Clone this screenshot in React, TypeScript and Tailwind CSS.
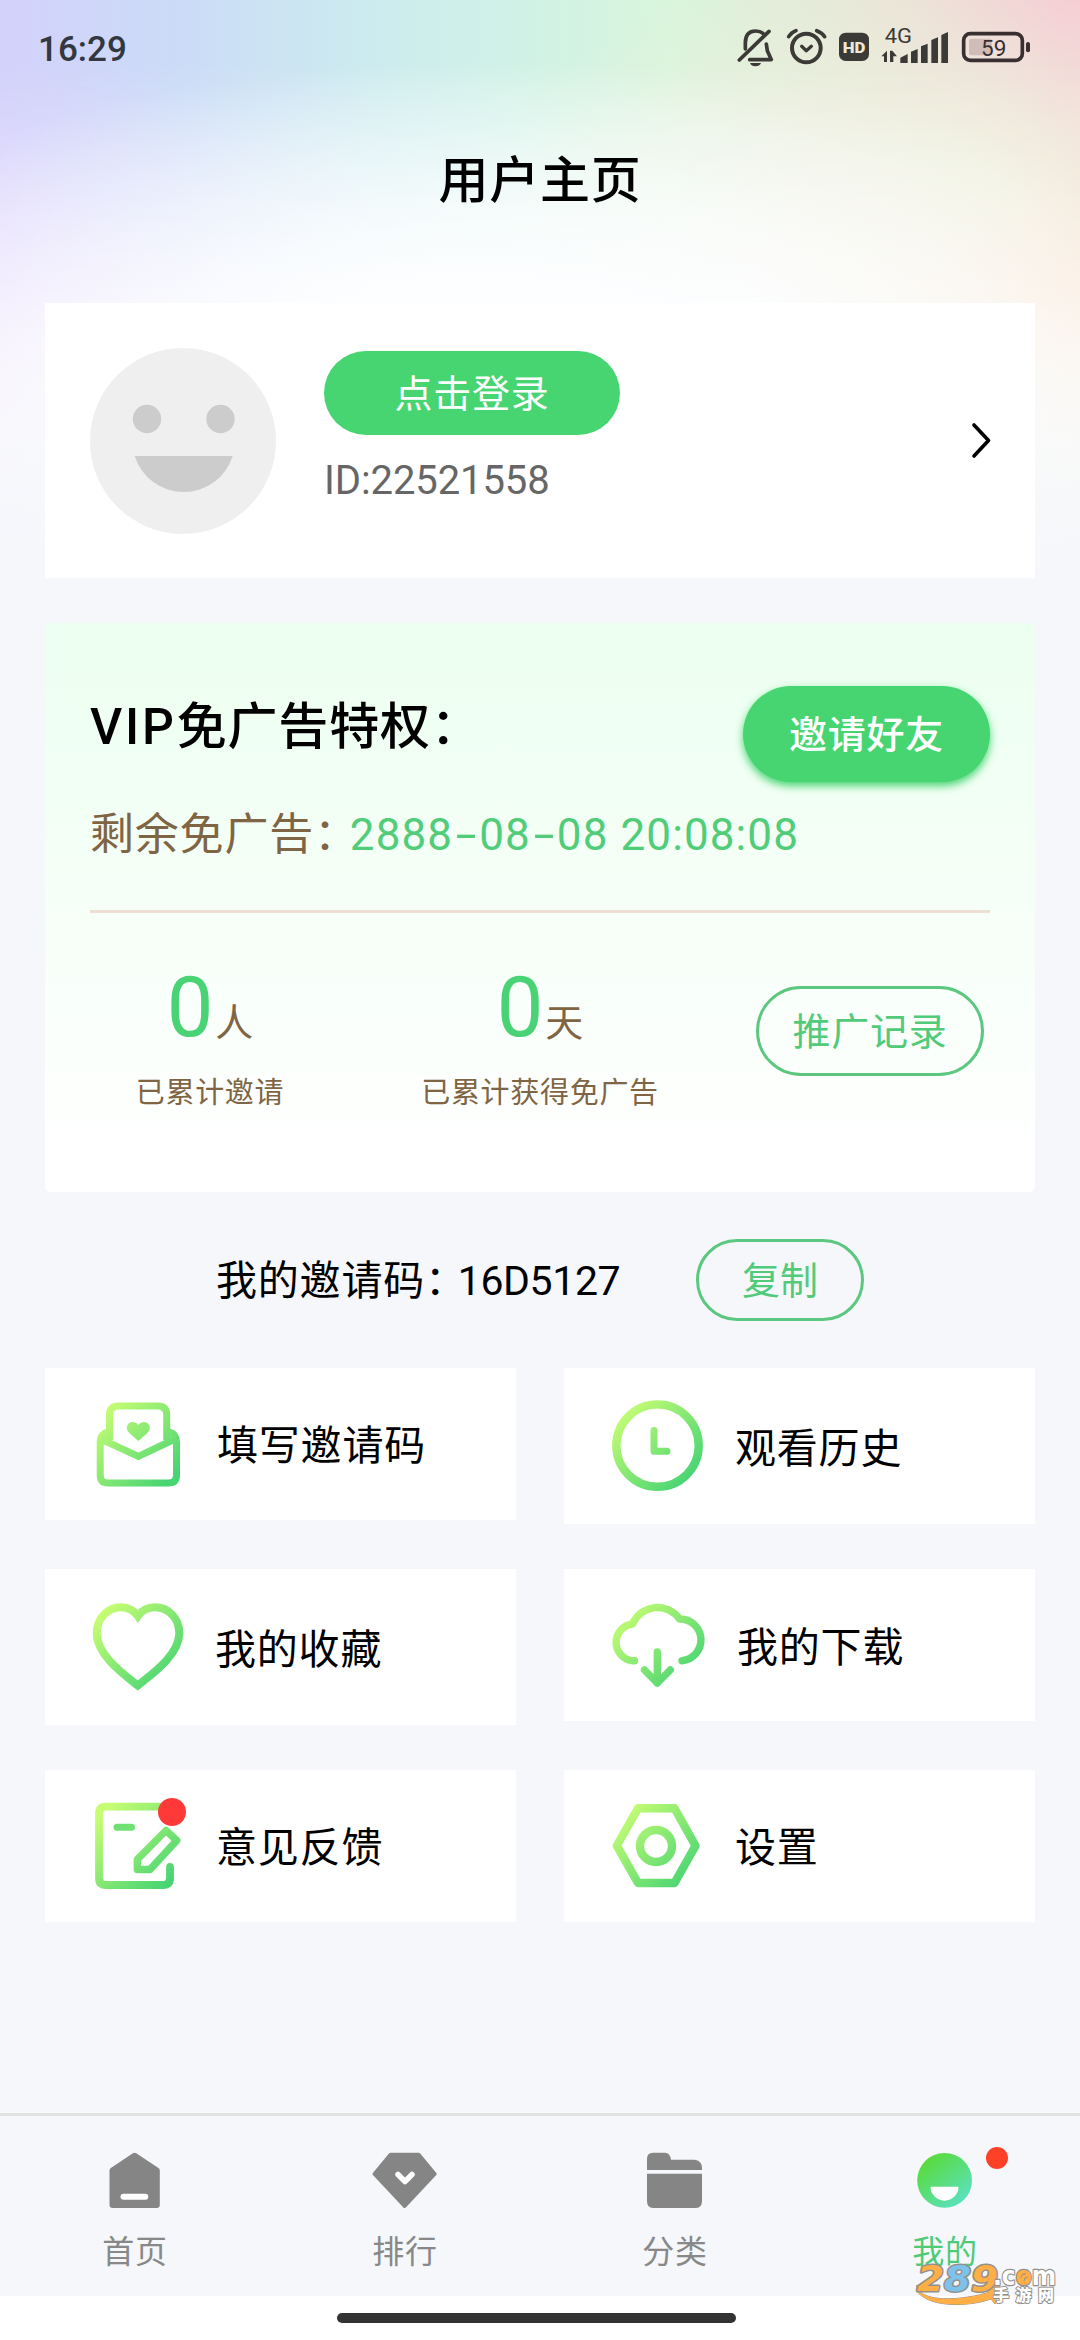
import type { ReactNode } from "react";

function Backdrop() {
  return (
    <div className="absolute inset-x-0 top-0 h-[620px] bg-[linear-gradient(to_right,#d3d1fb_0%,#cbdcf7_17%,#ccebef_34%,#d0f2e6_48%,#d9f5dc_62%,#e8e6d6_80%,#f7c8d2_98%)]">
      <div className="absolute inset-0 bg-[radial-gradient(ellipse_420px_240px_at_86%_190px,#ecf0df_15%,#ecf0df00_100%)]" />
      <div className="absolute inset-0 bg-[linear-gradient(to_right,#f5e9fe,#fafcff_35%,#fdfdfe_65%,#fdf3e4)] [mask-image:linear-gradient(to_bottom,transparent_60px,#000_370px)]" />
      <div className="absolute inset-0 bg-[radial-gradient(ellipse_760px_300px_at_46%_360px,#fdfeff_25%,#fdfeff00_100%)]" />
      <div className="absolute inset-0 bg-[linear-gradient(to_bottom,#f6f7fb00_290px,#f8fafccc_440px,#f5f7fb_570px)]" />
    </div>
  );
}

function StatusBar() {
  return (
    <div className="flex h-[98px] items-center justify-between pr-[46px] pl-[38px] text-[#33383f]">
      <span className="text-[35px] leading-none font-medium">16:29</span>
      <svg className="h-[50px] w-[300px]" viewBox="99 75 900 150" fill="none" stroke="#3b3a36" strokeLinecap="round" strokeLinejoin="round">
        <path d="M133 150V132Q133 96 164 96Q178 96 186 103M196 135L199 155L211 182H146" strokeWidth="11" />
        <path d="M204 97L115 183" strokeWidth="11" />
        <path d="M147 192H180Q176 202 163 202Q151 202 147 192Z" fill="#3b3a36" stroke="none" />
        <circle cx="316" cy="147" r="43" strokeWidth="12" />
        <path d="M263 113Q270 101 285 95M347 95Q363 101 371 113" strokeWidth="11" />
        <path d="M302 142L316 155L331 142" strokeWidth="10" />
        <rect x="414" y="101" width="90" height="85" rx="20" fill="#3b3a36" stroke="none" />
        <text x="459" y="161" textAnchor="middle" fontSize="46" fontWeight="900" textLength="68" lengthAdjust="spacingAndGlyphs" fill="#ebe7d9" stroke="none">HD</text>
        <text x="551" y="131" fontSize="61" textLength="82" lengthAdjust="spacingAndGlyphs" fill="#3b3a36" stroke="none">4G</text>
        <path d="M541 172L558 155V189H549V172ZM567 155H574L588 172H577V189H567ZM598 176L620 165V192H598ZM630 158L650 150V192H630ZM660 142L680 134V192H660ZM691 123L711 115V192H691ZM721 108L741 99V192H721Z" fill="#3b3a36" stroke="none" />
        <rect x="804" y="119" width="68" height="50" rx="6" fill="#d0bdb9" stroke="none" />
        <rect x="788" y="104" width="176" height="80" rx="20" stroke="#392f30" strokeWidth="11" />
        <rect x="975" y="129" width="12" height="31" rx="6" fill="#392f30" stroke="none" />
        <text x="878" y="170" textAnchor="middle" fontSize="68" textLength="76" lengthAdjust="spacingAndGlyphs" fill="#392f30" stroke="none">59</text>
      </svg>
    </div>
  );
}

function ProfileCard() {
  return (
    <section className="mx-[45px] mt-[43px] flex h-[275px] items-start bg-white">
      <svg className="mt-[45px] ml-[45px] size-[186px]" viewBox="0 0 186 186">
        <circle cx="93" cy="93" r="93" fill="#efefef" />
        <g fill="#ccc">
          <circle cx="57" cy="71" r="14.2" />
          <circle cx="130.5" cy="71" r="14.2" />
          <path d="M44.7 108H142.7A51.3 51.3 0 0 1 44.7 108Z" />
        </g>
      </svg>
      <div className="mt-12 ml-12 flex flex-col">
        <button className="flex h-[84px] w-[296px] items-center justify-center rounded-full bg-[#46d571] pt-[2px] text-[38px] leading-none tracking-[0.8px] text-white">
          点击登录
        </button>
        <span className="mt-[26px] text-[40px] leading-[40px] tracking-[-0.1px] text-[#666]">ID:22521558</span>
      </div>
      <svg className="mt-[116px] mr-[41px] ml-auto h-10 w-6" viewBox="0 0 24 40" fill="none" stroke="#000" strokeWidth="3.6" strokeLinecap="round" strokeLinejoin="round">
        <path d="M4 6L18.5 21.5L4 37" />
      </svg>
    </section>
  );
}

interface StatProps {
  value: string;
  unit: string;
  label: string;
}

function Stat({ value, unit, label }: StatProps) {
  return (
    <div className="flex flex-col items-center text-[#7f6544]">
      <p className="flex h-[82px] items-baseline gap-[2px] leading-[82px]">
        <span className="text-[83px] text-[#4ad374]">{value}</span>
        <span className="text-[38px]">{unit}</span>
      </p>
      <p className="mt-[27px] text-[29px] leading-[34px] tracking-[0.7px]">{label}</p>
    </div>
  );
}

function Dash() {
  return <span className="inline-block w-[26px] scale-x-[1.7] text-center tracking-normal">-</span>;
}

function VipCard() {
  return (
    <section className="mx-[45px] mt-[45px] h-[569px] rounded-md bg-linear-to-b from-[#ecfff0] to-white to-95%">
      <div className="flex items-start justify-between px-[45px] pt-[63px]">
        <h2 className="mt-4 text-[50px] leading-[50px] font-medium tracking-[0.8px]">
          <span className="tracking-[2.8px]">VIP</span>免广告特权：
        </h2>
        <button className="flex h-24 w-[247px] items-center justify-center rounded-full bg-[#46d571] pt-[2px] text-[38px] leading-none font-medium tracking-[0.8px] text-white shadow-[0_4px_8px_#46d571]">
          邀请好友
        </button>
      </div>
      <p className="mx-[45px] mt-[30px] flex h-[46px] items-center text-[44px] leading-[46px] tracking-[0.8px] text-[#7f6544]">
        <span>剩余免广告：</span>
        <span className="-ml-[9px] tracking-[1.1px] text-[#51cd79]">
          2888
          <Dash />
          08
          <Dash />
          08 20:08:08
        </span>
      </p>
      <div className="mx-[45px] mt-[52px] h-[3px] bg-[#eedfd3]" />
      <div className="mt-[54px] grid grid-cols-3">
        <Stat value="0" unit="人" label="已累计邀请" />
        <Stat value="0" unit="天" label="已累计获得免广告" />
        <button className="mt-[19px] flex h-[90px] w-[228px] items-center justify-center justify-self-center rounded-full border-3 border-[#5bc77f] pt-[2px] text-[38px] leading-none tracking-[0.8px] text-[#51cb79]">
          推广记录
        </button>
      </div>
    </section>
  );
}

function InviteCode() {
  return (
    <div className="mt-[47px] flex h-[82px] items-center pl-[216px]">
      <p className="flex w-[480px] pt-[2px] text-[41px] leading-[48px] tracking-[0.8px]">
        <span>我的邀请码：</span>
        <span className="-ml-[9px] tracking-[-0.4px]">16D5127</span>
      </p>
      <button className="flex h-[82px] w-[168px] items-center justify-center rounded-full border-3 border-[#5bc77f] pt-[2px] text-[38px] leading-none text-[#51cb79]">
        复制
      </button>
    </div>
  );
}

// Shared outline style: lime at the top left, green at the bottom right
function GradientIcon({ id, width, children }: { id: string; width: number; children: ReactNode }) {
  return (
    <svg className="size-[100px]" viewBox="0 0 100 100" fill="none" stroke={`url(#${id})`} strokeWidth={width} strokeLinecap="round" strokeLinejoin="round">
      <defs>
        <linearGradient id={id} gradientUnits="userSpaceOnUse" x1="16" y1="16" x2="84" y2="84">
          <stop offset="0" stopColor="#c6fd73" />
          <stop offset="1" stopColor="#47d473" />
        </linearGradient>
      </defs>
      {children}
    </svg>
  );
}

function MenuItem({ icon, label, className, labelClass }: { icon: ReactNode; label: string; className: string; labelClass: string }) {
  return (
    <div className={`flex items-start self-start bg-white pt-[26px] pl-[43px] ${className}`}>
      {icon}
      <span className={`text-[41px] leading-[48px] tracking-[0.8px] ${labelClass}`}>{label}</span>
    </div>
  );
}

function MenuGrid() {
  return (
    <div className="mx-[45px] mt-[47px] grid grid-cols-2 gap-x-12 gap-y-[45px]">
      <MenuItem
        label="填写邀请码"
        className="h-[152px]"
        labelClass="mt-7 ml-[29px]"
        icon={
          <GradientIcon id="invite" width={7}>
            <path d="M21.5 46V21q0-9 9-9H69.7q9 0 9 9V46M20 38Q12.2 40 12.2 48V81q0 8 8 8H80.5q8 0 8-8V48Q88.5 40 81 38" strokeLinecap="butt" />
            <path d="M14 45.5L50.3 62.5L86 45.5" strokeLinecap="butt" strokeLinejoin="miter" />
            <path d="M50.3 47L41.5 39.2C34 32 44 23.5 50.3 31C56.6 23.5 66.6 32 59.1 39.2Z" fill="url(#invite)" stroke="none" />
          </GradientIcon>
        }
      />
      <MenuItem
        label="观看历史"
        className="h-[156px]"
        labelClass="mt-[31px] ml-[28px]"
        icon={
          <GradientIcon id="history" width={8.4}>
            <circle cx="50.5" cy="51.6" r="41.2" />
            <path d="M47 36.5V57.3H60" strokeWidth="7" />
          </GradientIcon>
        }
      />
      <MenuItem
        label="我的收藏"
        className="h-[156px]"
        labelClass="mt-[31px] ml-[27px]"
        icon={
          <GradientIcon id="favorite" width={8}>
            <path d="M49.8 90.5C35 79 8.7 60 8.7 38C8.7 23 20 12.2 33 12.2C40 12.2 46 15.5 49.8 21C53.5 15.5 60 12.2 67 12.2C80 12.2 91.3 23 91.3 38C91.3 60 64 79 49.8 90.5Z" strokeLinejoin="miter" />
          </GradientIcon>
        }
      />
      <MenuItem
        label="我的下载"
        className="h-[152px]"
        labelClass="mt-[29px] ml-[30px]"
        icon={
          <GradientIcon id="download" width={7.4}>
            <path d="M27.5 65.7H25A18.5 18.5 0 0 1 25.5 29A27 27 0 0 1 72.5 24A20.9 20.9 0 0 1 75 65.7" />
            <path d="M50.3 57V88M37.5 75L50.3 88L63.2 75" />
          </GradientIcon>
        }
      />
      <MenuItem
        label="意见反馈"
        className="h-[152px]"
        labelClass="mt-7 ml-7"
        icon={
          <div className="relative">
            <GradientIcon id="feedback" width={7.8}>
              <path d="M72 10.7H18q-7 0-7 7V82q0 7 7 7H75q7 0 7-7V71" />
              <path d="M29 31.3H43.5" stroke="#6fe073" strokeWidth="7" />
              <path d="M78 34.5L88.7 44.5L62 73.5H49.3V63.3Z" strokeWidth="7.4" />
            </GradientIcon>
            <span className="absolute top-[2px] left-[70px] size-7 rounded-full bg-[#ff3838]" />
          </div>
        }
      />
      <MenuItem
        label="设置"
        className="h-[152px]"
        labelClass="mt-7 ml-7"
        icon={
          <GradientIcon id="settings" width={8.4}>
            <path d="M31 12.3H67.5L88.5 49.7L67.5 87H31L9.8 49.7Z" />
            <circle cx="49" cy="50" r="16" />
          </GradientIcon>
        }
      />
    </div>
  );
}

function Tab({ label, children, active }: { label: string; children: ReactNode; active?: boolean }) {
  return (
    <div className="relative flex w-[270px] flex-col items-center pt-[34px]">
      <svg className="h-[60px] w-[66px]" viewBox="0 0 66 60" strokeLinejoin="round" strokeLinecap="round">
        {children}
      </svg>
      <span className={`mt-[23px] text-[32px] leading-[38px] tracking-[0.8px] ${active ? "text-[#4fcb78]" : "text-[#888]"}`}>{label}</span>
      {active && <span className="absolute top-[31px] left-[176px] size-[22px] rounded-full bg-[#fd4128]" />}
    </div>
  );
}

function TabBar() {
  return (
    <nav className="mt-auto flex h-[183px] border-t-3 border-[#e2e2e2] bg-[#f5f7fb]">
      <Tab label="首页">
        <path d="M32.6 5.7L54.8 20.5V55H10.5V20.5Z" fill="#858585" stroke="#858585" strokeWidth="6" />
        <path d="M21.5 46.7H43.3" stroke="#fff" strokeWidth="6" />
      </Tab>
      <Tab label="排行">
        <path d="M18.5 4.7H46.7L62.6 24L32.6 56L2.6 24Z" fill="#858585" stroke="#858585" strokeWidth="4" />
        <path d="M26 24.5L33 31.5L40 24.5" fill="none" stroke="#fff" strokeWidth="5.5" />
      </Tab>
      <Tab label="分类">
        <path d="M5 20V9Q5 2.7 11 2.7H23Q28 2.7 29 9.7H53Q60 11 60 18V20Z" fill="#858585" />
        <path d="M5 23.7H60V51Q60 58 54 58H11Q5 58 5 51Z" fill="#858585" />
      </Tab>
      <Tab label="我的" active>
        <defs>
          <linearGradient id="mine" x1="0.2" y1="0.1" x2="0.85" y2="0.9">
            <stop offset="0" stopColor="#58db3c" />
            <stop offset="1" stopColor="#5ce1c0" />
          </linearGradient>
        </defs>
        <circle cx="32.6" cy="30.4" r="27.4" fill="url(#mine)" />
        <path d="M18.5 36.7H46.5A14 14 0 0 1 18.5 36.7Z" fill="#fff" />
      </Tab>
    </nav>
  );
}

function SiteMark() {
  return (
    <svg className="absolute top-[2257px] left-[912px] h-[54px] w-[148px] overflow-visible" viewBox="0 -4 148 54" stroke="#94908c" paintOrder="stroke" strokeLinejoin="round">
      <path d="M5 24C4 35 26 41 56 36Q70 34 77 31L73 28L88 22L83 43L79 38C60 45 28 46 13 37Q2 31 5 24Z" fill="#ffaf46" strokeWidth="1" />
      <text x="5" y="30" fontFamily="DejaVu Sans" fontWeight="700" fontStyle="italic" fontSize="36" strokeWidth="3" textLength="81" lengthAdjust="spacingAndGlyphs">
        <tspan fill="#ffaf46">2</tspan>
        <tspan fill="#7cc2ea">8</tspan>
        <tspan fill="#ffaf46">9</tspan>
      </text>
      <text x="81" y="24" fontFamily="DejaVu Sans" fontWeight="700" fontSize="26" strokeWidth="2.4" fill="#fff" textLength="63" lengthAdjust="spacingAndGlyphs">
        .c<tspan fill="#ffaf46">o</tspan>m
      </text>
      <circle cx="112.5" cy="17" r="4" fill="#ffaf46" stroke="none" />
      <path d="M109 17Q109 13 114 13M112 20Q112 16 116 16" fill="none" strokeWidth="1" />
      <text x="81" y="40" fontFamily="Noto Sans CJK SC" fontWeight="900" fontSize="16" letterSpacing="6.5" strokeWidth="2" fill="#fff">手游网</text>
    </svg>
  );
}

export default function App() {
  return (
    <div className="relative h-[2340px] w-[1080px] overflow-hidden bg-[#f5f7fb] font-[Roboto,'Noto_Sans_CJK_SC',sans-serif] text-black">
      <Backdrop />
      <div className="relative flex h-full flex-col">
        <StatusBar />
        <h1 className="mt-[50px] h-28 pt-[3px] text-center text-[50px] leading-[60px] font-medium tracking-[0.8px]">用户主页</h1>
        <ProfileCard />
        <VipCard />
        <InviteCode />
        <MenuGrid />
        <TabBar />
        <div className="flex h-11 bg-white pt-[17px] pl-[337px]">
          <div className="h-[10px] w-[399px] rounded-full bg-[#333]" />
        </div>
      </div>
      <SiteMark />
    </div>
  );
}
